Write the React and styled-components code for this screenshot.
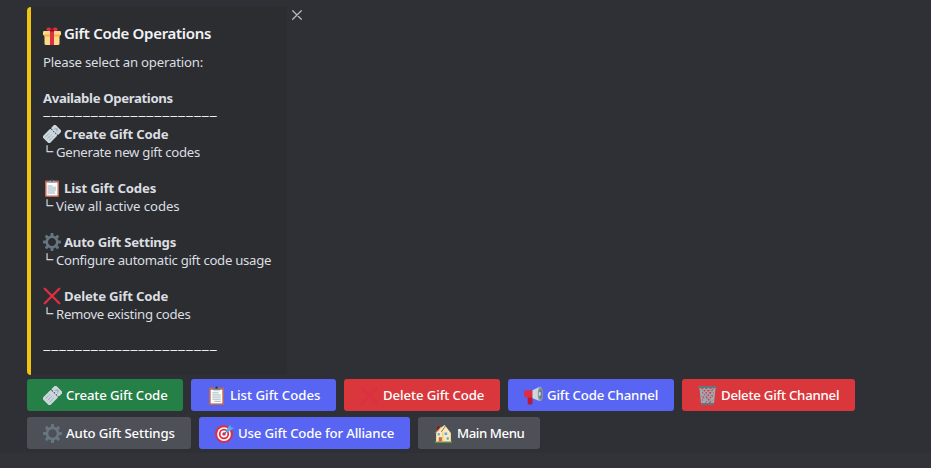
import React from 'react';
import styled, { createGlobalStyle } from 'styled-components';

const GlobalStyle = createGlobalStyle`
  * { box-sizing: border-box; }
  body { margin: 0; background: #313338; overflow: hidden; }
`;

const Message = styled.main`
  height: 453px;
  padding: 7px 0 0 27px;
  background: #2e3035;
  color: #dbdee1;
  font: 400 13.2px/18px "Noto Sans", sans-serif;
`;

const EmbedRow = styled.div`
  display: flex;
  align-items: flex-start;
`;

const Embed = styled.article`
  width: 260px;
  height: 368px;
  padding: 16px 0 0 12px;
  border-left: 4px solid #f1c40f;
  border-radius: 4px;
  background: #2b2d31;
`;

const Close = styled.button`
  display: flex;
  margin: 3px 0 0 5px;
  padding: 0;
  border: 0;
  background: none;
  color: #b5bac1;
`;

const Title = styled.h1`
  display: flex;
  align-items: flex-end;
  gap: 3px;
  height: 22px;
  margin: 0 0 8px;
  color: #f2f3f5;
  font-size: 15px;
  font-weight: 650;
  line-height: 23px;
`;

const Text = styled.span`
  letter-spacing: ${(p) => p.$track}px;
  white-space: nowrap;
`;

const Description = styled.p`
  height: 18px;
  margin: 0 0 18px;
`;

const SectionName = styled.h2`
  height: 18px;
  margin: 0;
  font-size: inherit;
  font-weight: 700;
`;

const Rule = styled.div`
  height: 18px;
  color: #f2f3f5;
  font-size: 7.5px;
  font-weight: 800;
  line-height: 16px;
  letter-spacing: 0.43px;
  white-space: nowrap;
`;

const Operation = styled.section`
  height: 36px;
  margin-bottom: 18px;
`;

const OperationName = styled.h3`
  display: flex;
  gap: 3px;
  height: 18px;
  margin: 0;
  font-size: inherit;
  font-weight: 700;
`;

const OperationNote = styled.div`
  display: flex;
  height: 18px;
`;

const Branch = styled.span`
  width: 15px;
  margin-left: -2px;
  font: 700 12px/17px "Noto Sans CJK JP", sans-serif;
  -webkit-text-stroke: 0.4px #dbdee1;
`;

const Buttons = styled.div`
  display: flex;
  flex-direction: column;
  gap: 6px;
  padding-top: 4px;
`;

const ButtonRow = styled.div`
  display: flex;
  gap: 8px;
`;

const fills = { green: '#248046', blurple: '#5865f2', red: '#da373c', grey: '#4e5058' };

const Button = styled.button`
  display: flex;
  align-items: center;
  gap: 4px;
  width: ${(p) => p.$width}px;
  height: 32px;
  padding: 0 0 0 16px;
  border: 0;
  border-radius: 3px;
  background: ${(p) => fills[p.$tone]};
  color: #fff;
  font: 550 13.2px/18px "Noto Sans", sans-serif;
`;

const Svg = styled.svg`
  display: block;
  flex: none;
  width: ${(p) => p.$size}px;
  height: ${(p) => p.$size}px;
`;

const glyphs = {
  gift: (
    <>
      <path fill="#fdd888" d="M3 14h30v19a3 3 0 0 1-3 3H6a3 3 0 0 1-3-3z" />
      <path fill="#fcab40" d="M3 16h30v3H3z" />
      <rect x="0" y="8" width="36" height="9" rx="2.5" fill="#fdd888" />
      <path fill="#fcab40" d="M2 15h32v2.500H2z" />
      <path fill="#da2f47" d="M14 8h8v28h-8z" />
      <path fill="#da2f47" d="M18 8C14 7 8 9 7 6c-1-3 2-6 5-5 3 0 6 3 6 5 0-2 3-5 6-5 3-1 6 2 5 5-1 3-7 1-11 2z" />
      <path fill="#a0041e" d="M14 5h8v4h-8z" />
    </>
  ),
  ticket: (
    <g transform="rotate(-45 18 18)">
      <path fill="#ccd6dd" d="M0 10a2 2 0 0 1 2-2h20l2 2 2-2h8a2 2 0 0 1 2 2v16a2 2 0 0 1-2 2h-8l-2-2-2 2H2a2 2 0 0 1-2-2z" />
      <path stroke="#3b4852" strokeWidth="2" strokeDasharray="3 2.500" d="M24 10v17" />
      <path stroke="#8b99a4" strokeWidth="1.400" d="M5 13h12M5 18h12M5 23h12" strokeDasharray="8 1.500" />
      <path stroke="#8b99a4" strokeWidth="1.300" fill="none" d="m28 22 5-4-5-4M31 16v4" />
    </g>
  ),
  clipboard: (
    <>
      <rect x="4" y="3" width="28" height="33" rx="2.500" fill="#c1694f" />
      <path fill="#fff" d="M7 7h22v26H7z" />
      <path fill="#ccd6dd" d="M12 5h12v5H12z" />
      <path fill="#66757f" d="M11 7V4.500L15 4a3 3 0 0 1 6 0l4 .5V7z" />
      <circle cx="18" cy="3" r="2" fill="#292f33" />
      <path stroke="#99aab5" strokeWidth="1.700" d="M10 13h12M10 17h16M10 21h16M10 25h16M14 29h12" />
    </>
  ),
  clipboardPlain: (
    <>
      <rect x="4" y="3" width="28" height="33" rx="2.500" fill="#c1694f" />
      <path fill="#fff" d="M7 7h22v26H7z" />
      <path fill="#ccd6dd" d="M9 12h10v3h7v9h-2v6H9z" />
      <path fill="#99aab5" d="M11 8V5l4-1a3 3 0 0 1 6 0l4 1v3z" />
      <circle cx="18" cy="3" r="1.800" fill="#292f33" />
    </>
  ),
  gear: (
    <path
      fill="#66757f"
      d="M34 15h-3.362c-.324-1.369-.864-2.651-1.582-3.814l2.379-2.379c.781-.781.781-2.048 0-2.829l-1.414-1.414c-.781-.781-2.047-.781-2.828 0l-2.379 2.379C23.65 6.225 22.369 5.686 21 5.362V2c0-1.104-.896-2-2-2h-2c-1.104 0-2 .896-2 2v3.362c-1.369.324-2.651.864-3.814 1.582L8.808 4.565c-.781-.781-2.048-.781-2.828 0L4.565 5.979c-.781.781-.781 2.048-.001 2.829l2.379 2.379C6.225 12.35 5.686 13.632 5.362 15H2c-1.104 0-2 .896-2 2v2c0 1.104.896 2 2 2h3.362c.324 1.368.864 2.65 1.582 3.813l-2.379 2.379c-.78.78-.78 2.048.001 2.829l1.414 1.414c.78.78 2.047.78 2.828 0l2.379-2.379c1.163.719 2.445 1.258 3.814 1.582V34c0 1.104.896 2 2 2h2c1.104 0 2-.896 2-2v-3.362c1.368-.324 2.65-.864 3.813-1.582l2.379 2.379c.781.781 2.047.781 2.828 0l1.414-1.414c.781-.781.781-2.048 0-2.829l-2.379-2.379c.719-1.163 1.258-2.445 1.582-3.814H34c1.104 0 2-.896 2-2v-2C36 15.896 35.104 15 34 15zM18 26c-4.418 0-8-3.582-8-8s3.582-8 8-8 8 3.582 8 8-3.582 8-8 8z"
    />
  ),
  cross: <path stroke="#dd2e44" strokeWidth="4.800" strokeLinecap="round" d="M3.500 3.500 32.500 32.500M32.500 3.500 3.500 32.500" />,
  megaphone: (
    <>
      <path fill="#be1931" d="M7 18h9v14a3 3 0 0 1-3 3h-3a3 3 0 0 1-3-3z" />
      <path fill="#dd2e44" d="M0 12a4 4 0 0 1 4-4h14v14H4a4 4 0 0 1-4-4z" />
      <path fill="#ccd6dd" d="M16 8 31 1v28l-15-6z" />
      <ellipse cx="31" cy="15" rx="5" ry="14" fill="#8899a6" />
      <ellipse cx="31.500" cy="15" rx="2.600" ry="9" fill="#66757f" />
      <ellipse cx="30" cy="15" rx="2" ry="4" fill="#ccd6dd" />
    </>
  ),
  basket: (
    <>
      <path fill="none" stroke="#99aab5" strokeWidth="2.600" d="m4 3 3 30M32 3l-3 30M5 5l7 8-6 8 7 7-5 6M12 4 6 13l8 9-6 9M12 4l7 9-7 8 7 8-4 5M20 4l-8 9 8 9-8 10M20 4l7 9-7 8 7 9-4 4M28 4l-9 9 8 9-8 10M31 5l-4 8 3 6-3 4 2 6" />
      <path stroke="#66757f" strokeWidth="3.600" strokeLinecap="round" d="M2 2h32M7 34h22" />
    </>
  ),
  target: (
    <>
      <circle cx="17" cy="19" r="17" fill="#dd2e44" />
      <circle cx="17" cy="19" r="13" fill="#fff" />
      <circle cx="17" cy="19" r="9.800" fill="#dd2e44" />
      <circle cx="17" cy="19" r="6.500" fill="#fff" />
      <circle cx="17" cy="19" r="3.300" fill="#dd2e44" />
      <path stroke="#3b6e9e" strokeWidth="2" d="M17 19 30 6" />
      <path fill="#55acee" d="m22 10 7-9 1 5 6 1-9 7-6 1z" />
    </>
  ),
  house: (
    <>
      <path fill="#5c913b" d="M2 32h32v4H2z" />
      <path fill="#a0041e" d="M6 5h5v9H6z" />
      <path fill="#ffe8b6" d="M4 17 13 7l7-5 12 15v16H4z" />
      <path fill="none" stroke="#66757f" strokeWidth="1.800" d="m14 15 8-12" />
      <path fill="none" stroke="#ffcc4d" strokeWidth="1.500" d="m3 17 10-11" />
      <path fill="#55acee" d="M7 17h4v5H7zM20 16h5v5h-5zM24 25h4v5h-4z" />
      <path fill="#c1694f" d="M9 25h6v8H9z" />
      <path fill="#e2b877" d="M16 16h1.500v17H16z" />
    </>
  ),
};

const Emoji = ({ name, size = 18 }) => (
  <Svg $size={size} viewBox="0 0 36 36" fill="none" aria-hidden="true">{glyphs[name]}</Svg>
);

const operations = [
  { icon: 'ticket', name: 'Create Gift Code', track: -0.2, note: 'Generate new gift codes', noteTrack: -0.28 },
  { icon: 'clipboardPlain', name: 'List Gift Codes', track: -0.14, note: 'View all active codes', noteTrack: -0.1 },
  { icon: 'gear', name: 'Auto Gift Settings', track: -0.27, note: 'Configure automatic gift code usage', noteTrack: -0.3 },
  { icon: 'cross', name: 'Delete Gift Code', track: -0.18, note: 'Remove existing codes', noteTrack: -0.32 },
];

const buttonRows = [
  [
    { icon: 'ticket', label: 'Create Gift Code', tone: 'green', width: 156, track: -0.11 },
    { icon: 'clipboard', label: 'List Gift Codes', tone: 'blurple', width: 145, track: 0 },
    { icon: 'cross', label: 'Delete Gift Code', tone: 'red', width: 156, track: -0.1 },
    { icon: 'megaphone', label: 'Gift Code Channel', tone: 'blurple', width: 166, track: -0.16 },
    { icon: 'basket', label: 'Delete Gift Channel', tone: 'red', width: 173, track: -0.23 },
  ],
  [
    { icon: 'gear', label: 'Auto Gift Settings', tone: 'grey', width: 164, track: -0.13 },
    { icon: 'target', label: 'Use Gift Code for Alliance', tone: 'blurple', width: 211, track: -0.15 },
    { icon: 'house', label: 'Main Menu', tone: 'grey', width: 122, track: -0.42 },
  ],
];

const dashes = '—'.repeat(22);

export default function App() {
  return (
    <>
      <GlobalStyle />
      <Message>
        <EmbedRow>
          <Embed>
            <Title><Emoji name="gift" /><Text $track={-0.3}>Gift Code Operations</Text></Title>
            <Description><Text $track={-0.2}>Please select an operation:</Text></Description>
            <SectionName><Text $track={-0.37}>Available Operations</Text></SectionName>
            <Rule>{dashes}</Rule>
            {operations.map((op) => (
              <Operation key={op.name}>
                <OperationName><Emoji name={op.icon} /><Text $track={op.track}>{op.name}</Text></OperationName>
                <OperationNote><Branch>└</Branch><Text $track={op.noteTrack}>{op.note}</Text></OperationNote>
              </Operation>
            ))}
            <Rule>{dashes}</Rule>
          </Embed>
          <Close aria-label="Dismiss">
            <Svg $size={10} viewBox="0 0 10 10" fill="none" stroke="currentColor" strokeWidth="1.300" strokeLinecap="round">
              <path d="M.7.7l8.600 8.600M9.300.7.7 9.300" />
            </Svg>
          </Close>
        </EmbedRow>
        <Buttons>
          {buttonRows.map((row, i) => (
            <ButtonRow key={i}>
              {row.map((b) => (
                <Button key={b.label} $tone={b.tone} $width={b.width}>
                  <Emoji name={b.icon} size={19} />
                  <Text $track={b.track}>{b.label}</Text>
                </Button>
              ))}
            </ButtonRow>
          ))}
        </Buttons>
      </Message>
    </>
  );
}
